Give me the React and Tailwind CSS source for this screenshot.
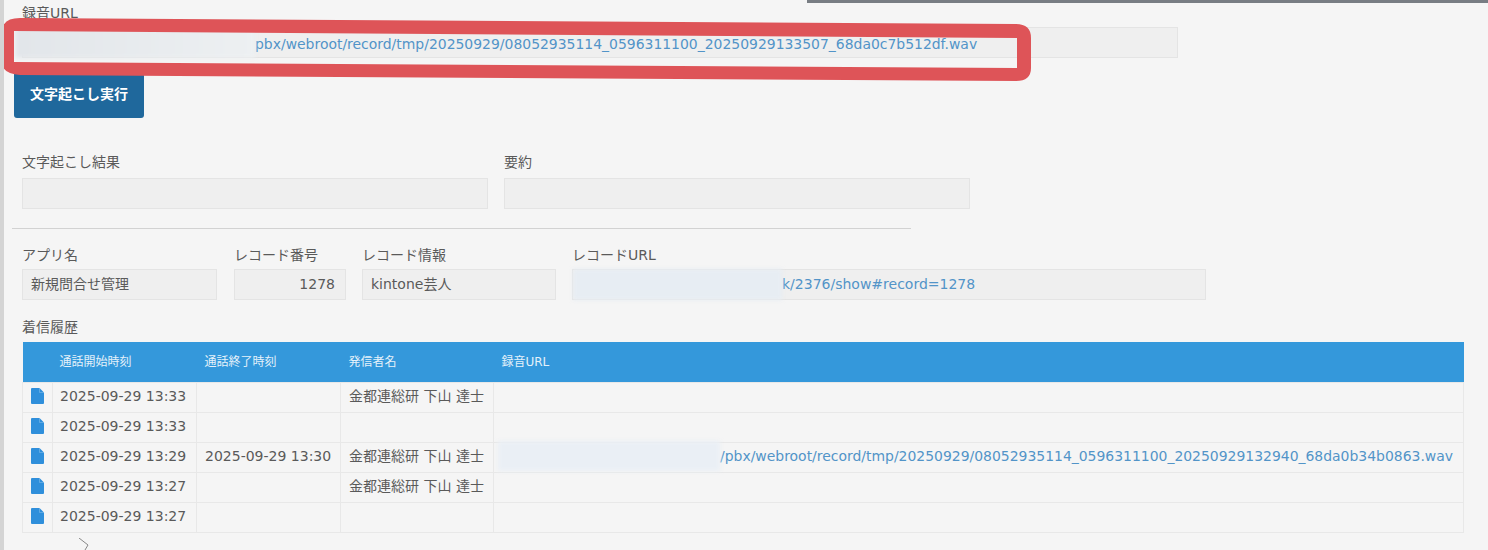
import React from "react";

const font = { fontFamily: '"DejaVu Sans", "Noto Sans CJK JP", sans-serif' };

const rows = [
  { start: "2025-09-29 13:33", end: "", name: "金都連総研 下山 達士", url: "" },
  { start: "2025-09-29 13:33", end: "", name: "", url: "" },
  {
    start: "2025-09-29 13:29",
    end: "2025-09-29 13:30",
    name: "金都連総研 下山 達士",
    url: "/pbx/webroot/record/tmp/20250929/08052935114_0596311100_20250929132940_68da0b34b0863.wav",
  },
  { start: "2025-09-29 13:27", end: "", name: "金都連総研 下山 達士", url: "" },
  { start: "2025-09-29 13:27", end: "", name: "", url: "" },
];

function Label({ children }) {
  return <div className="h-[16px] text-[14px] leading-[16px] text-[#5a5a5a]">{children}</div>;
}

function Box({ className, children }) {
  return (
    <div className={`h-[31px] border border-[#e4e4e4] bg-[#efefef] text-[14px] leading-[29px] text-[#5a5a5a] ${className}`}>
      {children}
    </div>
  );
}

function FileIcon() {
  return (
    <svg width="13" height="16" viewBox="0 0 13 16" className="ml-[8px] block">
      <path d="M1 0H8.5L13 4.5V15a1 1 0 0 1-1 1H1a1 1 0 0 1-1-1V1a1 1 0 0 1 1-1Z" fill="#2f8fdb" />
      <path d="M8.5 0V4.5H13" fill="none" stroke="#7dbbea" strokeWidth="0.6" />
    </svg>
  );
}

function RedMark() {
  return (
    <svg className="absolute -left-[4px] top-0" width="1040" height="90" viewBox="0 0 1040 90">
      <path
        fillRule="evenodd"
        fill="#de5458"
        d="M20 18 L1016 24 Q1031 24 1031 38 L1031 68 Q1031 81 1016 81 L20 75 Q2 74 2 62 L2 32 Q2 18 20 18 Z M14 31 L14 62 L1017 68 L1017 38 Z"
      />
    </svg>
  );
}

export default function App() {
  return (
    <div className="relative h-[550px] w-[1488px] overflow-hidden border-l-4 border-[#d4d4d4] bg-[#f5f5f5]" style={font}>
      <div className="ml-[803px] h-[3px] bg-[#787d83]" />

      <div className="ml-[18px] mt-[2px]">
        <Label>録音URL</Label>
      </div>
      <Box className="ml-[18px] mt-[6px] flex w-[1156px] items-center">
        <span className="-ml-[8px] h-[31px] w-[240px] shrink-0 bg-linear-to-r from-[#e2e6ea] to-[#edf0f2] blur-[2px]" />
        <span className="pt-[3px] text-[13.95px] text-[#5294c8]">pbx/webroot/record/tmp/20250929/08052935114_0596311100_20250929133507_68da0c7b512df.wav</span>
      </Box>

      <button className="ml-[10px] mt-[12px] flex h-[48px] w-[130px] items-center justify-center rounded-[3px] bg-[#1f689c] text-[14px] font-bold text-white">
        文字起こし実行
      </button>

      <div className="ml-[18px] mt-[36px] flex gap-4">
        <div className="w-[466px]">
          <Label>文字起こし結果</Label>
          <Box className="mt-[8px]" />
        </div>
        <div className="w-[466px]">
          <Label>要約</Label>
          <Box className="mt-[8px]" />
        </div>
      </div>

      <div className="ml-[8px] mt-[19px] h-px w-[899px] bg-[#d2d2d2]" />

      <div className="ml-[18px] mt-[18px] flex">
        <div className="w-[195px]">
          <Label>アプリ名</Label>
          <Box className="mt-[6px] pl-2">新規問合せ管理</Box>
        </div>
        <div className="ml-[17px] w-[112px]">
          <Label>レコード番号</Label>
          <Box className="mt-[6px] pr-[10px] text-right">1278</Box>
        </div>
        <div className="ml-[16px] w-[194px]">
          <Label>レコード情報</Label>
          <Box className="mt-[6px] pl-2">kintone芸人</Box>
        </div>
        <div className="ml-[16px] w-[634px]">
          <Label>レコードURL</Label>
          <Box className="mt-[6px] flex items-center">
            <span className="h-[31px] w-[209px] shrink-0 bg-[#e7edf3] blur-[2px]" />
            <span className="text-[#5294c8]">k/2376/show#record=1278</span>
          </Box>
        </div>
      </div>

      <div className="ml-[18px] mt-[19px]">
        <Label>着信履歴</Label>
      </div>

      <table className="ml-[18px] mt-[7px] w-[1442px] table-fixed border-collapse text-[14px] text-[#5a5a5a]">
        <colgroup>
          <col className="w-[30px]" />
          <col className="w-[144px]" />
          <col className="w-[144px]" />
          <col className="w-[153px]" />
          <col />
        </colgroup>
        <thead>
          <tr className="h-[40px] bg-[#3498db] text-left text-[12px] text-[#e4f1fa]">
            <th />
            <th className="pl-[7px] font-normal">通話開始時刻</th>
            <th className="pl-2 font-normal">通話終了時刻</th>
            <th className="pl-2 font-normal">発信者名</th>
            <th className="pl-2 font-normal">録音URL</th>
          </tr>
        </thead>
        <tbody>
          {rows.map((r, i) => (
            <tr key={i} className="h-[30px]">
              <td className="border border-[#e8e8e8] pb-[2px]"><FileIcon /></td>
              <td className="whitespace-nowrap border border-[#e8e8e8] pb-[2px] pl-[7px]">{r.start}</td>
              <td className="whitespace-nowrap border border-[#e8e8e8] pb-[2px] pl-2">{r.end}</td>
              <td className="whitespace-nowrap border border-[#e8e8e8] pb-[2px] pl-2">{r.name}</td>
              <td className="border border-[#e8e8e8] pl-1">
                {r.url && (
                  <div className="flex h-[29px] items-center whitespace-nowrap pb-[2px]">
                    <span className="h-[30px] w-[222px] shrink-0 bg-[#eaeff5] blur-[2px]" />
                    <span className="text-[13.95px] text-[#5294c8]">{r.url}</span>
                  </div>
                )}
              </td>
            </tr>
          ))}
        </tbody>
      </table>

      <svg width="12" height="12" viewBox="0 0 12 12" className="ml-[74px] mt-[5px]">
        <path d="M1 0L10 7" fill="none" stroke="#888" strokeWidth="1" />
        <path d="M10 7L7 12" fill="none" stroke="#888" strokeWidth="1" />
      </svg>

      <RedMark />
    </div>
  );
}
